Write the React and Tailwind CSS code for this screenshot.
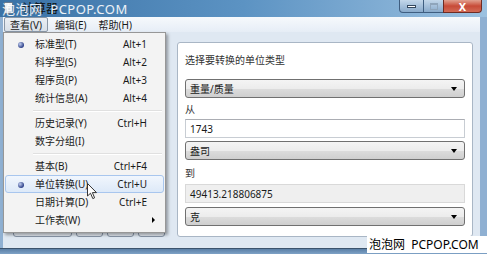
import React from "react";

// one row in the 查看 dropdown
const MenuItem = ({ label, shortcut, bullet, active, submenu }) => (
  <div
    className={
      "relative flex items-center h-[18px] pl-[29px] pr-[16px] mx-[1px] rounded-[3px] border " +
      (active
        ? "border-[#a8c6ee] bg-gradient-to-b from-[#f1f6fd] to-[#dde9f8]"
        : "border-transparent")
    }
  >
    {bullet && (
      <span className="absolute left-[12px] top-[6px] w-[6px] h-[6px] rounded-full bg-[radial-gradient(circle_at_35%_35%,#c3d0f0,#2c3f88_70%)]" />
    )}
    <span>{label}</span>
    {shortcut && <span className="ml-auto">{shortcut}</span>}
    {submenu && (
      <span className="ml-auto -mr-[8px] w-0 h-0 border-y-[3px] border-y-transparent border-l-[3px] border-l-black" />
    )}
  </div>
);

const Separator = () => (
  <div className="h-[7px] flex flex-col justify-center pl-[29px] pr-[3px]">
    <div className="h-px bg-[#e0e0e0]" />
    <div className="h-px bg-white" />
  </div>
);

const ComboBox = ({ value }) => (
  <div className="flex items-center h-[19px] px-[4px] rounded-[3px] border border-[#707070] bg-[linear-gradient(#f4f4f4_0%,#ececec_50%,#dcdcdc_51%,#cfcfcf_100%)]">
    <span>{value}</span>
    <span className="ml-auto mr-[3px] w-0 h-0 border-x-[3px] border-x-transparent border-t-[4px] border-t-black" />
  </div>
);

const App = () => {
  const items = [
    { label: "标准型(T)", shortcut: "Alt+1", bullet: true },
    { label: "科学型(S)", shortcut: "Alt+2" },
    { label: "程序员(P)", shortcut: "Alt+3" },
    { label: "统计信息(A)", shortcut: "Alt+4" },
    "sep",
    { label: "历史记录(Y)", shortcut: "Ctrl+H" },
    { label: "数字分组(I)" },
    "sep",
    { label: "基本(B)", shortcut: "Ctrl+F4" },
    { label: "单位转换(U)", shortcut: "Ctrl+U", bullet: true, active: true },
    { label: "日期计算(D)", shortcut: "Ctrl+E" },
    { label: "工作表(W)", submenu: true },
  ];

  return (
    <div className="relative w-[487px] h-[254px] overflow-hidden flex flex-col bg-[#8fb0d2] text-[10px] leading-[14px] text-[#1a1a1a] font-['Noto_Sans','Noto_Sans_CJK_SC',sans-serif]">
      {/* title bar */}
      <div className="h-[17px] flex items-start bg-gradient-to-r from-[#3a72a6] via-[#5c93c3] to-[#9cc1e0]">
        <div className="mt-[2px] ml-[4px] w-[9px] h-[12px] rounded-[1px] border border-[#6b7c8f] bg-gradient-to-b from-[#f4f6f8] to-[#c9d2dc]" />
        <span className="ml-[9px] mt-[1px] text-[12px] leading-[15px] text-[#111]">计算器</span>
        <div className="ml-auto mr-[5px] flex h-[13px]">
          <div className="w-[25px] flex items-center justify-center rounded-bl-[4px] border border-t-0 border-[#3f5e80] bg-gradient-to-b from-[#c3d7ea] to-[#89aacb]">
            <div className="w-[9px] h-[3px] bg-white border border-[#33475d]" />
          </div>
          <div className="w-[19px] flex items-center justify-center border-b border-[#3f5e80] bg-gradient-to-b from-[#c3d7ea] to-[#89aacb]">
            <div className="w-[8px] h-[7px] border border-[#8fa5bb] border-t-2" />
          </div>
          <div className="w-[39px] flex items-center justify-center rounded-br-[4px] border border-t-0 border-[#6e2b23] bg-gradient-to-b from-[#e0a090] via-[#c74a37] to-[#d26a55]">
            <span className="text-white font-bold text-[11px] leading-[11px]">X</span>
          </div>
        </div>
      </div>

      <div className="flex-1 flex flex-col ml-[3px] mr-[7px] bg-[#dfe8f2]">
        {/* menu bar */}
        <div className="h-[15px] flex items-center gap-[2px] pl-[1px] bg-gradient-to-b from-[#f6f9fc] to-[#e6edf6]">
          <div className="h-[15px] flex items-center px-[5px] rounded-[2px] border border-[#8a97a6] bg-gradient-to-b from-[#eaeef3] to-[#d9e0e8]">
            查看(V)
          </div>
          <div className="h-[15px] flex items-center px-[5px]">编辑(E)</div>
          <div className="h-[15px] flex items-center px-[5px]">帮助(H)</div>
        </div>

        {/* client area */}
        <div className="flex-1 flex items-start pt-[10px]">
          {/* standard calculator (mostly under the menu) */}
          <div className="w-[167px] h-[195px] flex flex-col justify-end pl-[10px]">
            <div className="flex gap-[4px] h-[10px]">
              <div className="w-[59px] rounded-[3px] border border-[#8896a8] bg-gradient-to-b from-[#f3f6fa] to-[#dfe6ee]" />
              <div className="w-[27px] rounded-[3px] border border-[#8896a8] bg-gradient-to-b from-[#f3f6fa] to-[#dfe6ee]" />
              <div className="w-[27px] rounded-[3px] border border-[#8896a8] bg-gradient-to-b from-[#f3f6fa] to-[#dfe6ee]" />
              <div className="w-[27px] rounded-[3px] border border-[#8896a8] bg-gradient-to-b from-[#f3f6fa] to-[#dfe6ee]" />
            </div>
          </div>

          {/* unit conversion panel */}
          <div className="ml-[7px] w-[296px] h-[195px] flex flex-col px-[7px] pt-[10px] rounded-[3px] border border-[#a9b6c5] bg-white">
            <div className="h-[14px] text-[#333]">选择要转换的单位类型</div>
            <div className="mt-[12px]">
              <ComboBox value="重量/质量" />
            </div>
            <div className="mt-[4px] h-[14px] text-[#333]">从</div>
            <div className="mt-[3px] h-[19px] flex items-center px-[4px] border border-[#c8cdd3] border-t-[#abadb3] bg-white">
              1743
            </div>
            <div className="mt-[3px]">
              <ComboBox value="盎司" />
            </div>
            <div className="mt-[6px] h-[14px] text-[#333]">到</div>
            <div className="mt-[4px] h-[19px] flex items-center px-[4px] border border-[#d9d9d9] bg-[#efefef]">
              49413.218806875
            </div>
            <div className="mt-[4px]">
              <ComboBox value="克" />
            </div>
          </div>
        </div>
      </div>

      {/* bottom frame */}
      <div className="h-[6px] border-t border-[#3b536d] bg-gradient-to-b from-[#5a7fa6] to-[#7fa2c6]" />

      {/* 查看 dropdown */}
      <div className="absolute left-[3px] top-[32px] w-[163px] pt-[2px] pb-[3px] border border-[#979797] bg-[#f3f3f3] shadow-[2px_2px_3px_rgba(0,0,0,0.35)]">
        {items.map((it, i) =>
          it === "sep" ? <Separator key={i} /> : <MenuItem key={i} {...it} />
        )}
      </div>

      {/* mouse pointer */}
      <svg className="absolute left-[87px] top-[183px]" width="11" height="17" viewBox="0 0 11 17">
        <path
          d="M0.5 0.5 L0.5 13 L3.5 10.2 L5.8 15.6 L7.6 14.8 L5.4 9.6 L9.5 9.6 Z"
          fill="white"
          stroke="#333"
          strokeWidth="1"
          strokeLinejoin="round"
        />
      </svg>

      {/* watermarks */}
      <div className="absolute left-[2px] top-[1px] whitespace-nowrap text-[13px] leading-[16px] text-white/90 tracking-[0.5px]">
        泡泡网 &nbsp;PCPOP.COM
      </div>
      <div className="absolute right-0 bottom-[1px] w-[120px] h-[17px] pl-[2px] whitespace-nowrap bg-white text-[12px] leading-[17px] text-black">
        泡泡网 &nbsp;PCPOP.COM
      </div>
    </div>
  );
};

export default App;
